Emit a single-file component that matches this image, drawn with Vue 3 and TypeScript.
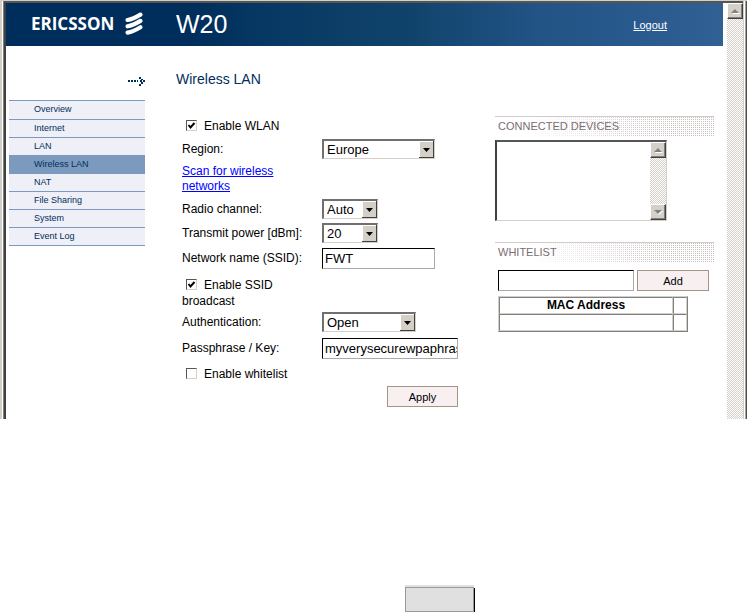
<script setup lang="ts">
import { ref } from 'vue'

const menu: string[] = ['Overview', 'Internet', 'LAN', 'Wireless LAN', 'NAT', 'File Sharing', 'System', 'Event Log']
const active = ref('Wireless LAN')

const wlan = ref(true)
const broadcast = ref(true)
const whitelist = ref(false)
const region = ref('Europe')
const channel = ref('Auto')
const power = ref('20')
const ssid = ref('FWT')
const auth = ref('Open')
const passphrase = ref('myverysecurewpaphrase')
const mac = ref('')
</script>

<template>
  <div class="page">
    <div class="window">
      <div class="view">
        <header class="banner">
          <div class="brand">
            <span class="brand-name">ERICSSON</span>
            <svg class="brand-mark" viewBox="0 0 18 23" aria-hidden="true">
              <g fill="none" stroke="#fff" stroke-width="4.2" stroke-linecap="round">
                <path d="M2.600 8C7 7.200 11 5.200 15.400 2.600" />
                <path d="M2.600 14.300C7 13.500 11 11.500 15.400 8.900" />
                <path d="M2.600 20.600C7 19.800 11 17.800 15.400 15.200" />
              </g>
            </svg>
          </div>
          <span class="model">W20</span>
          <a class="logout" href="#">Logout</a>
        </header>

        <div class="columns">
          <nav class="side">
            <div class="arrow">
              <svg viewBox="0 0 18 9" width="18" height="9" aria-hidden="true" fill="#002e5c">
                <path d="M1 3h2v2h-2zM4 3h2v2h-2zM7 3h2v2h-2zM10 3h1v2h-1zM12 0h2v2h-2zM14 2h2v1h-2zM13 3h2v2h-2zM16 3h2v2h-2zM14 5h2v2h-2zM12 7h2v2h-2z" />
              </svg>
            </div>
            <ul class="menu">
              <li v-for="item in menu" :key="item" :class="{ active: item === active }">
                <a href="#" @click.prevent="active = item">{{ item }}</a>
              </li>
            </ul>
          </nav>

          <main class="main">
            <h1>Wireless LAN</h1>
            <form class="form" @submit.prevent>
              <label class="check"><input v-model="wlan" type="checkbox" />Enable WLAN</label>
              <div class="row">
                <label for="region">Region:</label>
                <select id="region" v-model="region" class="w-wide"><option>Europe</option></select>
              </div>
              <div class="row tall"><a href="#">Scan for wireless networks</a></div>
              <div class="row">
                <label for="channel">Radio channel:</label>
                <select id="channel" v-model="channel" class="w-small"><option>Auto</option></select>
              </div>
              <div class="row">
                <label for="power">Transmit power [dBm]:</label>
                <select id="power" v-model="power" class="w-small"><option>20</option></select>
              </div>
              <div class="row roomy">
                <label for="ssid">Network name (SSID):</label>
                <input id="ssid" v-model="ssid" class="text w-wide" type="text" />
              </div>
              <label class="check wrap"><input v-model="broadcast" type="checkbox" />Enable SSID broadcast</label>
              <div class="row roomy">
                <label for="auth">Authentication:</label>
                <select id="auth" v-model="auth" class="w-mid"><option>Open</option></select>
              </div>
              <div class="row roomy">
                <label for="key">Passphrase / Key:</label>
                <input id="key" v-model="passphrase" class="text w-full" type="text" />
              </div>
              <label class="check last"><input v-model="whitelist" type="checkbox" />Enable whitelist</label>
              <button class="apply" type="submit">Apply</button>
            </form>
          </main>

          <aside class="aside">
            <h2 id="devices">CONNECTED DEVICES</h2>
            <div class="list">
              <div class="list-body" role="listbox" aria-labelledby="devices"></div>
              <div class="track">
                <span class="stepper"><svg viewBox="0 0 9 5"><path d="M1 5L5 1L9 5z" fill="#fff" /><path d="M0 4L4 0L8 4z" fill="#808080" /></svg></span>
                <span class="stepper"><svg viewBox="0 0 9 5"><path d="M1 1H9L5 5z" fill="#fff" /><path d="M0 0H8L4 4z" fill="#808080" /></svg></span>
              </div>
            </div>
            <h2 id="white" class="second">WHITELIST</h2>
            <form class="adder" @submit.prevent>
              <input v-model="mac" class="text" type="text" aria-labelledby="white" />
              <button type="submit">Add</button>
            </form>
            <table>
              <thead>
                <tr><th>MAC Address</th><td class="slim"></td></tr>
              </thead>
              <tbody>
                <tr><td></td><td></td></tr>
              </tbody>
            </table>
          </aside>
        </div>
      </div>
      <div class="track">
        <span class="stepper"><svg viewBox="0 0 9 5"><path d="M1 5L5 1L9 5z" fill="#fff" /><path d="M0 4L4 0L8 4z" fill="#808080" /></svg></span>
      </div>
      <div class="edge"></div>
    </div>
    <div class="footer"><div class="plate"></div></div>
  </div>
</template>

<style>
body {
  background: #fff;
}
</style>

<style scoped>
.page {
  font-family: "Liberation Sans", Arial, sans-serif;
  font-size: 12px;
  color: #000;
}
.page * {
  box-sizing: border-box;
}
.window {
  display: flex;
  padding-left: 2px;
  border-top: 1px solid #d4d0c8;
  background: #d4d0c8;
}
.view {
  flex: 1;
  min-width: 0;
  padding: 0 4px 12px 0;
  margin-left: 2px;
  border-left: 2px solid #404040;
  border-top: 2px solid #555;
  background: #fff;
  box-shadow: -1px 0 #808080, -2px 0 #fff;
}
.edge {
  width: 4px;
  border-left: 1px solid #d4d0c8;
  border-right: 1px solid #505050;
  background: linear-gradient(90deg, #fff 50%, #a0a0a0 50%);
}
.banner {
  display: flex;
  align-items: center;
  height: 43px;
  padding: 0 56px 0 25px;
  color: #fff;
  background: linear-gradient(90deg, #002e5c 0%, #002e5c 26%, #083964 38%, #10436b 56%, #215385 74%, #28598c 86%, #316094 100%);
}
.brand {
  display: flex;
  align-items: center;
  gap: 11px;
  width: 145px;
  padding-bottom: 2px;
}
.brand-name {
  font: bold 17px/20px "Open Sans", sans-serif;
}
.brand-mark {
  width: 18px;
  height: 23px;
}
.model {
  flex: 1;
  font-size: 25px;
}
.logout {
  color: #fff;
  font-size: 11px;
}
.columns {
  display: flex;
}
.side {
  flex: none;
  width: 139px;
  margin-left: 3px;
  padding: 31px 3px 0 0;
}
.arrow {
  height: 23px;
  text-align: right;
  line-height: 0;
}
.menu {
  margin: 0;
  padding: 0;
  list-style: none;
  border-bottom: 1px solid #7b9abd;
}
.menu li {
  height: 18px;
  padding-left: 25px;
  border-top: 1px solid #7b9abd;
  background: #efeff7;
  font-size: 9px;
  line-height: 16px;
}
.menu li:first-child {
  height: 19px;
}
.menu li.active {
  background: #7b9abd;
}
.menu a {
  color: #002e5c;
  text-decoration: none;
}
.main {
  flex: none;
  width: 310px;
  padding: 24px 0 0 28px;
}
h1 {
  margin: 0 0 27px;
  color: #002e5c;
  font-size: 14px;
  line-height: 18px;
  font-weight: normal;
}
.form {
  display: flex;
  flex-direction: column;
  padding-left: 6px;
}
.row {
  display: flex;
  align-items: center;
  height: 24px;
}
.row > label,
.row > a {
  flex: none;
  width: 136px;
  margin-right: 4px;
  line-height: 15px;
}
.row.tall {
  height: 36px;
}
.row.roomy {
  height: 26px;
}
a {
  color: #00f;
}
.check {
  width: 140px;
  height: 22px;
  line-height: 22px;
}
.check.wrap {
  height: 38px;
  padding-top: 6px;
  line-height: 16px;
}
.check.last {
  height: 25px;
  line-height: 26px;
}
.check input {
  appearance: none;
  width: 11px;
  height: 11px;
  margin: 0 7px 0 4px;
  vertical-align: -1px;
  border: 1px solid;
  border-color: #555 #d4d0c8 #d4d0c8 #555;
  background: #fff;
}
.check input:checked {
  background: #fff url("data:image/svg+xml,%3Csvg xmlns='http://www.w3.org/2000/svg' viewBox='0 0 9 9'%3E%3Cpath d='M1.500 4L3.500 6.500L7.500 2' fill='none' stroke='%23000' stroke-width='2'/%3E%3C/svg%3E") center / 9px 9px no-repeat;
}
select {
  appearance: none;
  height: 20px;
  padding: 0 18px 0 3px;
  border: 2px solid;
  border-color: #707070 #d4d0c8 #d4d0c8 #707070;
  border-radius: 0;
  border-right-width: 1px;
  border-bottom-width: 1px;
  color: #000;
  font: 13px "Liberation Sans", Arial, sans-serif;
  background: #fff url("data:image/svg+xml,%3Csvg xmlns='http://www.w3.org/2000/svg' viewBox='0 0 15 17'%3E%3Cpath fill='%23404040' d='M0 0h15v17H0z'/%3E%3Cpath fill='%23fff' d='M0 0h14v16H0z'/%3E%3Cpath fill='%23d4d0c8' d='M1 1h13v15H1z'/%3E%3Cpath d='M4 7h7L7.500 11z'/%3E%3C/svg%3E") right center / 15px 17px no-repeat;
}
.w-wide {
  width: 113px;
}
.w-small {
  width: 56px;
}
.w-mid {
  width: 94px;
}
.w-full {
  width: 136px;
}
.text {
  height: 21px;
  padding: 0 0 0 2px;
  border: 1px solid;
  border-color: #000 #aaa #aaa #000;
  border-radius: 0;
  background: #fff;
  color: #000;
  font: 13px "Liberation Sans", Arial, sans-serif;
}
button {
  width: 72px;
  height: 21px;
  padding: 0;
  border: 1px solid #a59484;
  border-radius: 0;
  background: #f7eff0;
  color: #000;
  font: 11px "Liberation Sans", Arial, sans-serif;
}
.apply {
  align-self: flex-end;
  width: 71px;
}
.aside {
  flex: 1;
  min-width: 0;
  padding: 70px 9px 0 37px;
}
h2 {
  height: 20px;
  margin: 0 0 4px;
  padding-left: 3px;
  border-top: 1px solid #d6cbc6;
  background:
    linear-gradient(90deg, #fff 15%, transparent 80%),
    radial-gradient(circle at 0 0, #c6bfbd 1px, transparent 1px) 0 0 / 2px 2px;
  color: #7b6d73;
  font-size: 11px;
  line-height: 18px;
  font-weight: normal;
}
h2.second {
  margin: 21px 0 8px;
}
.list {
  display: flex;
  width: 172px;
  height: 81px;
  border: 2px solid;
  border-color: #555 #d4d0c8 #d4d0c8 #404040;
  border-right-width: 1px;
  border-bottom-width: 1px;
}
.list-body {
  flex: 1;
}
.track {
  display: flex;
  flex: none;
  flex-direction: column;
  justify-content: space-between;
  width: 16px;
  background: repeating-conic-gradient(#d4d0c8 0 25%, #fff 0 50%) 0 0 / 2px 2px;
}
.window > .track {
  border-top: 2px solid #555;
}
.stepper {
  display: flex;
  align-items: center;
  justify-content: center;
  height: 16px;
  border: 1px solid;
  border-color: #fff #404040 #404040 #fff;
  background: #d4d0c8;
  box-shadow: inset -1px -1px #808080;
}
.stepper svg {
  width: 9px;
  height: 5px;
}
.adder {
  display: flex;
  gap: 3px;
  margin-left: 3px;
}
.adder .text {
  width: 136px;
}
table {
  width: 190px;
  margin: 5px 0 0 3px;
  border: 1px solid;
  border-color: #d4d0c8 #808080 #808080 #d4d0c8;
  border-spacing: 0;
}
th,
td {
  height: 17px;
  padding: 0;
  border: 1px solid;
  border-color: #808080 #d4d0c8 #d4d0c8 #808080;
  line-height: 15px;
}
.slim {
  width: 14px;
}
.footer {
  display: flex;
  padding: 168px 0 0 405px;
}
.plate {
  width: 69px;
  height: 25px;
  border: 1px solid #999;
  background: #e0e0e0;
  box-shadow: 1px 1px #000, 0 -2px #e0e0e0;
}
</style>
